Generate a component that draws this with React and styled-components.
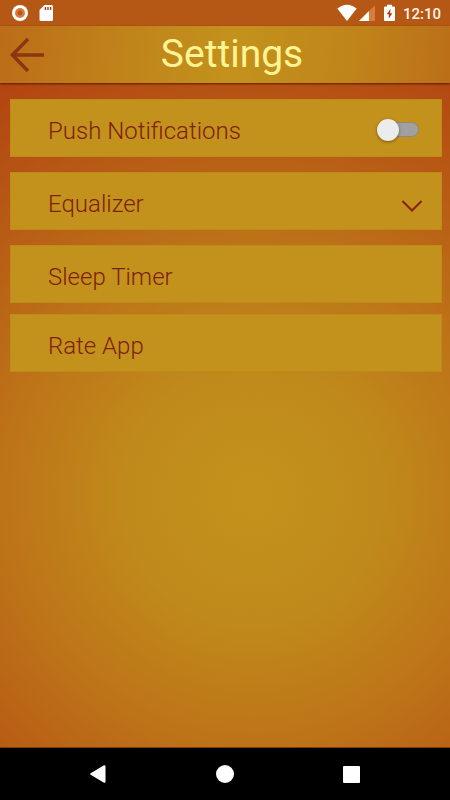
import React from "react";
import styled, { createGlobalStyle } from "styled-components";

const GlobalStyle = createGlobalStyle`
  *, *::before, *::after {
    box-sizing: border-box;
  }
  body {
    margin: 0;
    font-family: Roboto, "Liberation Sans", sans-serif;
  }
`;

const Screen = styled.div`
  min-height: 100vh;
  display: flex;
  flex-direction: column;
  background-color: #b55815;
`;

const StatusBar = styled.div`
  height: 26px;
  padding: 0 9px 0 11px;
  display: flex;
  align-items: center;
  justify-content: space-between;
`;

const StatusGroup = styled.div`
  display: flex;
  align-items: center;
  gap: ${props => props.$gap}px;
`;

const Clock = styled.span`
  margin-left: 4px;
  padding-top: 2px;
  color: #fff3ea;
  font-size: 15px;
  font-weight: 500;
  line-height: 24px;
`;

const Header = styled.header`
  position: relative;
  height: 57px;
  display: grid;
  grid-template-columns: 56px 1fr 42px;
  align-items: center;
  background: linear-gradient(97deg, #bc6d18 0%, #c0841a 29%, #c3921c 52%, #c0841a 78%, #bb6f18 100%);
  box-shadow: 0 1px 2px rgba(70, 15, 0, 0.8);
`;

const BackButton = styled.button`
  height: 57px;
  padding: 0 0 0 10px;
  display: flex;
  align-items: center;
  border: none;
  background: none;
  cursor: pointer;
`;

const Title = styled.h1`
  margin: 0;
  padding-bottom: 2px;
  color: #fff494;
  font-size: 39px;
  font-weight: 400;
  line-height: 48px;
  text-align: center;
`;

const Content = styled.main`
  flex: 1;
  padding: 16px 8px 16px 10px;
  background: radial-gradient(
    circle at 56% 62%,
    #c3921c 0px,
    #c08a1b 125px,
    #bd7318 250px,
    #b85d15 352px,
    #b34512 475px
  );
`;

const List = styled.ul`
  margin: 0;
  padding: 0;
  display: flex;
  flex-direction: column;
  gap: 15px;
  list-style: none;
`;

const ListItem = styled.li`
  height: 58px;
  background-color: #c3921c;
  box-shadow: inset 0 0 0 1px rgba(190, 130, 25, 0.5);
  &:last-child {
    margin-top: -4px;
  }
`;

const Row = styled.div`
  width: 100%;
  height: 100%;
  padding: 5px 20px 0 38px;
  display: flex;
  align-items: center;
  justify-content: space-between;
  border: none;
  background: none;
  color: #80200c;
  font-family: inherit;
  font-size: 24px;
  font-weight: 300;
  line-height: 28px;
  text-align: left;
`;

const Label = styled.label`
  flex: 1;
`;

const Chevron = styled.svg`
  margin-top: 5px;
`;

const Switch = styled.input`
  appearance: none;
  width: 42px;
  height: 22px;
  margin: 0 3px 2px 0;
  display: flex;
  align-items: center;
  cursor: pointer;
  &::before {
    content: "";
    width: 22px;
    height: 22px;
    z-index: 1;
    border-radius: 50%;
    background-color: #ececec;
    box-shadow: 0 1px 3px rgba(60, 30, 0, 0.55);
  }
  &::after {
    content: "";
    width: 30px;
    height: 15px;
    margin-left: -10px;
    border: 1px solid #8d8878;
    border-radius: 0 8px 8px 0;
    background-color: #a0a0a0;
  }
  &:checked {
    transform: rotate(180deg);
  }
`;

const NavBar = styled.nav`
  height: 53px;
  padding: 0 35px;
  display: flex;
  align-items: center;
  justify-content: space-around;
  border-top: 1px solid #7c3c0c;
  background-color: #000;
`;

const NavButton = styled.button`
  width: 24px;
  height: 24px;
  padding: 0;
  display: flex;
  align-items: center;
  justify-content: center;
  border: none;
  background: none;
  cursor: pointer;
`;

class SettingsScreen extends React.Component
{
  state = { push: false };

  togglePush = (e) => {
    this.setState({ push: e.target.checked });
  };

  render()
  {
    return(
      <Screen>
        <GlobalStyle />
        <StatusBar>
          <StatusGroup $gap={10}>
            <svg width="18" height="18" viewBox="0 0 18 18">
              <circle cx="9" cy="9" r="8" fill="#fff" />
              <circle cx="9" cy="9" r="5" fill="#d9793a" />
              <circle cx="9" cy="9" r="2.4" fill="#b55815" />
            </svg>
            <svg width="15" height="18" viewBox="0 0 15 18">
              <path d="M5.5 1H12.5Q14 1 14 2.5V15.5Q14 17 12.5 17H2Q.5 17 .5 15.5V6Z" fill="#fff" />
              <path d="M6.4 3V6M9 3V6M11.6 3V6" stroke="#a8320c" strokeWidth="1.4" />
            </svg>
          </StatusGroup>
          <StatusGroup $gap={2}>
            <svg width="20" height="18" viewBox="0 0 20 18">
              <path d="M.3 4.6Q10-3 19.7 4.6L10 17Z" fill="#fff" />
            </svg>
            <svg width="16" height="18" viewBox="0 0 16 18">
              <path d="M16 1.2V17H0Z" fill="#db7c38" />
              <path d="M10 7V17H0Z" fill="#fff" />
            </svg>
            <svg width="20" height="18" viewBox="0 0 20 18">
              <path d="M8.5 2.4H10V.8H15V2.4H16.5Q18 2.4 18 3.5V16Q18 17 17 17H8Q7 17 7 16V3.5Q7 2.4 8.5 2.4Z" fill="#fff" />
              <path d="M13.5 4.8L9.8 10.2H11.8V14.8L15.3 9.2H13.1Z" fill="#b03c10" />
            </svg>
            <Clock>12:10</Clock>
          </StatusGroup>
        </StatusBar>

        <Header>
          <BackButton type="button" aria-label="Back">
            <svg width="34" height="36" viewBox="0 0 34 36" fill="none" stroke="#8c3510" strokeWidth="3.4">
              <path d="M18 2L2.4 18L18 34M2 18H34" />
            </svg>
          </BackButton>
          <Title>Settings</Title>
        </Header>

        <Content>
          <List>
            <ListItem>
              <Row>
                <Label htmlFor="push">Push Notifications</Label>
                <Switch id="push" type="checkbox" role="switch" checked={this.state.push} onChange={this.togglePush} />
              </Row>
            </ListItem>
            <ListItem>
              <Row as="button" type="button">
                Equalizer
                <Chevron width="20" height="12" viewBox="0 0 20 12" fill="none" stroke="#85250f" strokeWidth="2">
                  <path d="M.5 1L10 10.5L19.5 1" />
                </Chevron>
              </Row>
            </ListItem>
            <ListItem>
              <Row as="button" type="button">Sleep Timer</Row>
            </ListItem>
            <ListItem>
              <Row as="button" type="button">Rate App</Row>
            </ListItem>
          </List>
        </Content>

        <NavBar>
          <NavButton type="button" aria-label="Back">
            <svg width="16" height="18" viewBox="0 0 16 18">
              <path d="M14.5 1.2V16.8L1.2 9Z" fill="#fff" stroke="#fff" strokeWidth="2" strokeLinejoin="round" />
            </svg>
          </NavButton>
          <NavButton type="button" aria-label="Home">
            <svg width="18" height="18" viewBox="0 0 18 18">
              <circle cx="9" cy="9" r="9" fill="#fff" />
            </svg>
          </NavButton>
          <NavButton type="button" aria-label="Recent apps">
            <svg width="17" height="17" viewBox="0 0 17 17">
              <rect width="17" height="17" rx="1" fill="#fff" />
            </svg>
          </NavButton>
        </NavBar>
      </Screen>
    );
  }
}

export default SettingsScreen;
